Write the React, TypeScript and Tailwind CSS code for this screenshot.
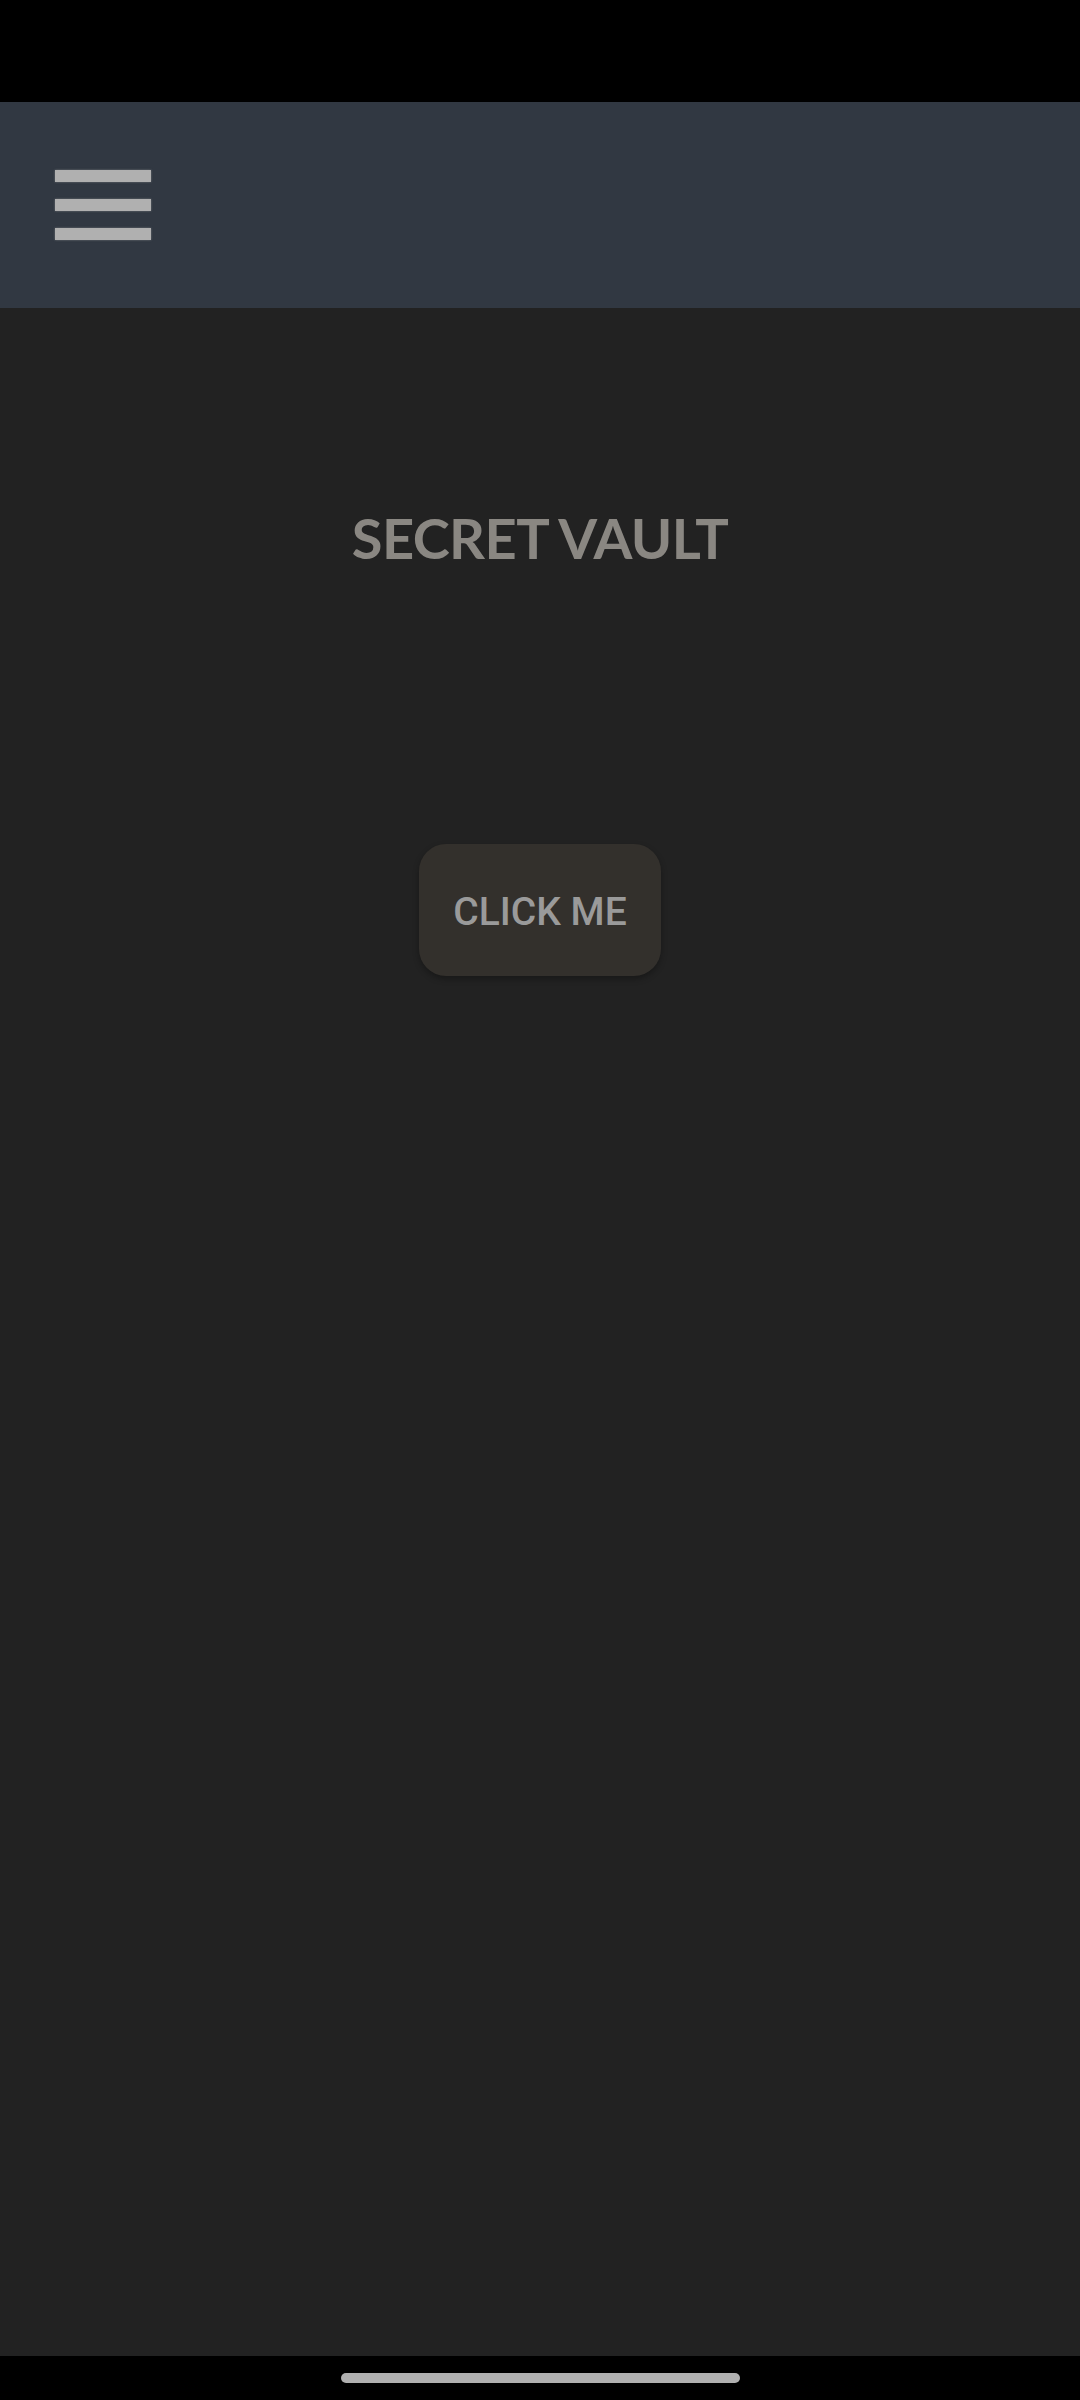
import React from "react";

export default function App() {
  return (
    <div className="w-[1080px] h-[2400px] flex flex-col bg-black">
      <div className="h-[102px] bg-black" />
      <header className="h-[206px] bg-[#313842] flex items-center pl-[55px]">
        <button className="flex flex-col gap-[17px] w-[96px]" aria-label="menu">
          <span className="block h-[12px] w-full bg-[#b0b0b0] shadow-[0_0_2px_rgba(176,176,176,0.5)]" />
          <span className="block h-[12px] w-full bg-[#b0b0b0] shadow-[0_0_2px_rgba(176,176,176,0.5)]" />
          <span className="block h-[12px] w-full bg-[#b0b0b0] shadow-[0_0_2px_rgba(176,176,176,0.5)]" />
        </button>
      </header>
      <main className="flex-1 bg-[#222222] flex flex-col items-center">
        <h1
          className="mt-[195px] text-[56px] leading-[70px] font-bold text-[#8a8782] tracking-[-0.6px]"
          style={{ fontFamily: "Lato, 'Open Sans', sans-serif" }}
        >
          SECRET VAULT
        </h1>
        <button
          className="mt-[271px] w-[242px] h-[132px] pt-[5px] rounded-[27px] bg-[#33302c] text-[#9a9a9a] text-[39px] font-medium shadow-[0_3px_6px_rgba(0,0,0,0.3)]"
          style={{ fontFamily: "Roboto, 'Noto Sans', sans-serif" }}
        >
          CLICK ME
        </button>
      </main>
      <div className="h-[44px] bg-black flex justify-center pt-[17px]">
        <div className="w-[399px] h-[10px] rounded-full bg-[#b0b0b0]" />
      </div>
    </div>
  );
}
